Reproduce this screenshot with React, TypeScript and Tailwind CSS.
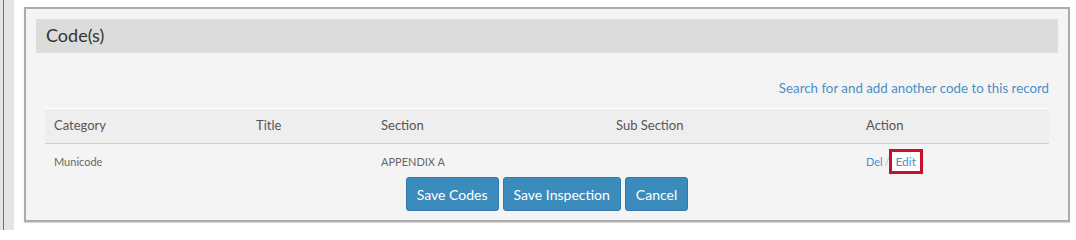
const font = { fontFamily: 'Lato, "Noto Sans", sans-serif' };

const columns = [
    { label: 'Category', width: 'w-[202px]' },
    { label: 'Title', width: 'w-[125px]' },
    { label: 'Section', width: 'w-[235px]' },
    { label: 'Sub Section', width: 'w-[250px]' },
    { label: 'Action', width: 'flex-1' },
];

function ActionButton({ children }: { children: React.ReactNode }) {
    return (
        <button className="h-[34px] px-[10px] rounded-[3px] border border-[#2f7aa8] bg-[#3b8bbc] text-[14px] text-white">
            {children}
        </button>
    );
}

export default function App() {
    return (
        <div className="flex h-[230px] w-[1076px] bg-white" style={font}>
            {/* left rail */}
            <div className="flex w-[14px] shrink-0">
                <div className="w-[3px] bg-[#e4e4e4]" />
                <div className="w-[1px] bg-[#3d7fb8]" />
                <div className="w-[10px] bg-[#e4e4e4]" />
            </div>

            <div className="pl-[10px] pt-[7px]">
                <div className="w-[1046px] h-[215px] border-2 border-[#acacac] bg-[#f4f4f4] px-[10px] pt-[10px] shadow-[0_1px_1px_rgba(0,0,0,0.15)]">
                    <div className="h-[34px] bg-[#dcdcdc] px-[10px] flex items-center">
                        <h2 className="text-[18px] text-[#333] -mt-[2px]">Code(s)</h2>
                    </div>

                    <div className="px-[9px]">
                        <div className="flex justify-end pt-[26px] h-[55px]">
                            <a href="#" className="text-[13.3px] text-[#4a8fc6] leading-[18px]">
                                Search for and add another code to this record
                            </a>
                        </div>

                        <div className="border-t border-white">
                            <div className="flex h-[35px] items-center bg-[#eeeeee] border-b border-[#cfcfcf] text-[13px] text-[#555]">
                                {columns.map((c) => (
                                    <div key={c.label} className={`${c.width} px-[9px]`}>
                                        {c.label}
                                    </div>
                                ))}
                            </div>
                            <div className="flex h-[33px] items-center pt-[4px] text-[11px] text-[#666]">
                                <div className="w-[202px] px-[9px]">Municode</div>
                                <div className="w-[125px] px-[9px]"></div>
                                <div className="w-[235px] px-[9px]">APPENDIX A</div>
                                <div className="w-[250px] px-[9px]"></div>
                                <div className="flex-1 px-[9px] flex items-center">
                                    <a href="#" className="text-[#4a8fc6]">Del</a>
                                    <span className="text-[#bbb] pl-[2px]">/</span>
                                    <span className="-ml-[1px] -mt-[2px] border-[3px] border-[#c8102e] bg-white h-[25px] w-[34px] flex items-center justify-center">
                                        <a href="#" className="text-[12px] text-[#4a8fc6]">Edit</a>
                                    </span>
                                </div>
                            </div>
                        </div>

                        <div className="flex justify-center gap-[4px]">
                            <ActionButton>Save Codes</ActionButton>
                            <ActionButton>Save Inspection</ActionButton>
                            <ActionButton>Cancel</ActionButton>
                        </div>
                    </div>
                </div>
            </div>
        </div>
    );
}
